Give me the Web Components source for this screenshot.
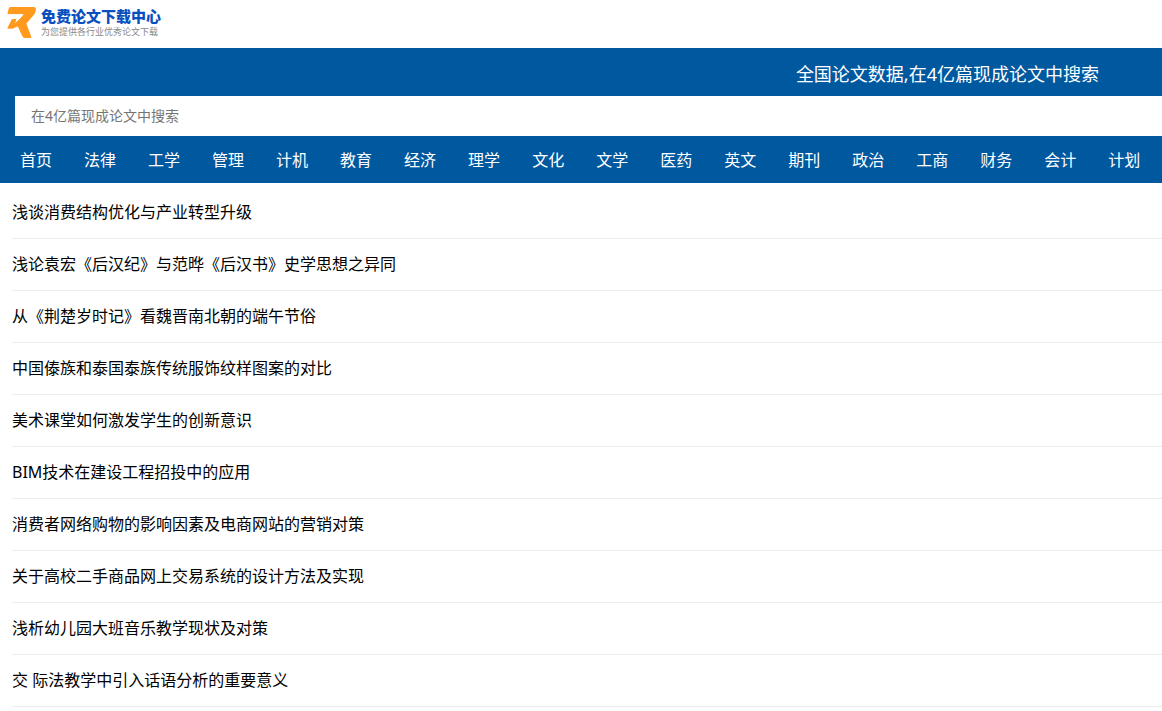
<!DOCTYPE html>
<html lang="zh-CN">
<head>
<meta charset="utf-8">
<meta name="viewport" content="width=device-width, initial-scale=1">
<title>免费论文下载中心</title>
<style>
body { margin: 0; background: #fff; color: #000; font: 16px/24px "Noto Sans", "Noto Sans CJK SC", sans-serif; }
</style>
</head>
<body>
<paper-site></paper-site>
<script>
class SiteLogo extends HTMLElement {
  constructor() {
    super();
    this.attachShadow({ mode: 'open' }).innerHTML = `
      <style>
        :host { display: block; }
        a { display: flex; align-items: center; gap: 1px; height: 48px; padding: 0 4px 2px; box-sizing: border-box; color: inherit; text-decoration: none; }
        svg { width: 36px; height: 38px; flex: none; }
        .words { display: flex; flex-direction: column; }
        b { font-size: 15px; line-height: 18px; font-weight: 900; color: #0a4fc0; }
        small { font-size: 9px; line-height: 14px; color: #888; }
      </style>
      <a href="#">
        <svg viewBox="0 0 108 114" aria-hidden="true">
          <path fill="#ff9a1f" d="M19 9H89Q98 10 95 21Q93 31 86 37L67 59L82 98Q83 102 78 102H62Q58 102 56 98L42 69L29 74H10L24 45H38L33 58L49 43L58 31H10L14 14Q15 9 19 9Z"/>
          <path fill="#fff" d="M10 31H59L48 43L33 58L38 44H24L9 74V31ZM10 74H27L40 67L44 75H10Z"/>
          <path fill="#ff9a1f" d="M24 45H37L32 59L48 44H66L40 68L31 62L24 73H10Z"/>
        </svg>
        <span class="words"><b>免费论文下载中心</b><small>为您提供各行业优秀论文下载</small></span>
      </a>`;
  }
}
customElements.define('site-logo', SiteLogo);

class SearchBanner extends HTMLElement {
  constructor() {
    super();
    this.attachShadow({ mode: 'open' }).innerHTML = `
      <style>
        :host { display: block; background: #00589f; color: #fff; }
        label { display: block; padding: 14px 63px 10px 15px; font-size: 18px; line-height: 24px; text-align: right; }
        form { margin: 0; padding-left: 15px; }
        input { display: block; width: 100%; height: 40px; box-sizing: border-box; margin: 0; padding: 0 16px 2px; border: 0; border-radius: 0; background: #fff; color: #333; font: inherit; font-size: 14px; outline: none; }
        input::placeholder { color: #757575; opacity: 1; }
      </style>
      <form role="search">
        <label for="q"><slot></slot></label>
        <input id="q" type="text" placeholder="在4亿篇现成论文中搜索">
      </form>`;
  }
}
customElements.define('search-banner', SearchBanner);

class NavLink extends HTMLElement {
  constructor() {
    super();
    this.attachShadow({ mode: 'open' }).innerHTML = `
      <style>
        :host { display: block; flex: none; }
        a { display: block; padding: 12px 16px 11px; color: #fff; text-decoration: none; }
      </style>
      <a href="#"><slot></slot></a>`;
  }
}
customElements.define('nav-link', NavLink);

class NavBar extends HTMLElement {
  constructor() {
    super();
    this.attachShadow({ mode: 'open' }).innerHTML = `
      <style>
        :host { display: block; background: #00589f; }
        nav { display: flex; padding-left: 4px; overflow: hidden; }
      </style>
      <nav><slot></slot></nav>`;
  }
}
customElements.define('nav-bar', NavBar);

class PaperItem extends HTMLElement {
  constructor() {
    super();
    this.attachShadow({ mode: 'open' }).innerHTML = `
      <style>
        :host { display: block; border-bottom: 1px solid #ececec; }
        a { display: block; padding: 13px 0 14px; color: #000; text-decoration: none; }
      </style>
      <a href="#"><slot></slot></a>`;
  }
}
customElements.define('paper-item', PaperItem);

class PaperList extends HTMLElement {
  constructor() {
    super();
    this.attachShadow({ mode: 'open' }).innerHTML = `
      <style>
        :host { display: block; padding: 4px 0 0 12px; }
      </style>
      <slot></slot>`;
  }
}
customElements.define('paper-list', PaperList);

const sections = ['首页', '法律', '工学', '管理', '计机', '教育', '经济', '理学', '文化', '文学', '医药', '英文', '期刊', '政治', '工商', '财务', '会计', '计划'];
const papers = [
  '浅谈消费结构优化与产业转型升级',
  '浅论袁宏《后汉纪》与范晔《后汉书》史学思想之异同',
  '从《荆楚岁时记》看魏晋南北朝的端午节俗',
  '中国傣族和泰国泰族传统服饰纹样图案的对比',
  '美术课堂如何激发学生的创新意识',
  'BIM技术在建设工程招投中的应用',
  '消费者网络购物的影响因素及电商网站的营销对策',
  '关于高校二手商品网上交易系统的设计方法及实现',
  '浅析幼儿园大班音乐教学现状及对策',
  '交 际法教学中引入话语分析的重要意义'
];

class PaperSite extends HTMLElement {
  constructor() {
    super();
    this.attachShadow({ mode: 'open' }).innerHTML = `
      <style>:host, header, main { display: block; }</style>
      <header>
        <site-logo></site-logo>
        <search-banner>全国论文数据,在4亿篇现成论文中搜索</search-banner>
        <nav-bar>${sections.map(s => `<nav-link>${s}</nav-link>`).join('')}</nav-bar>
      </header>
      <main><paper-list>${papers.map(p => `<paper-item>${p}</paper-item>`).join('')}</paper-list></main>`;
  }
}
customElements.define('paper-site', PaperSite);
</script>
</body>
</html>
